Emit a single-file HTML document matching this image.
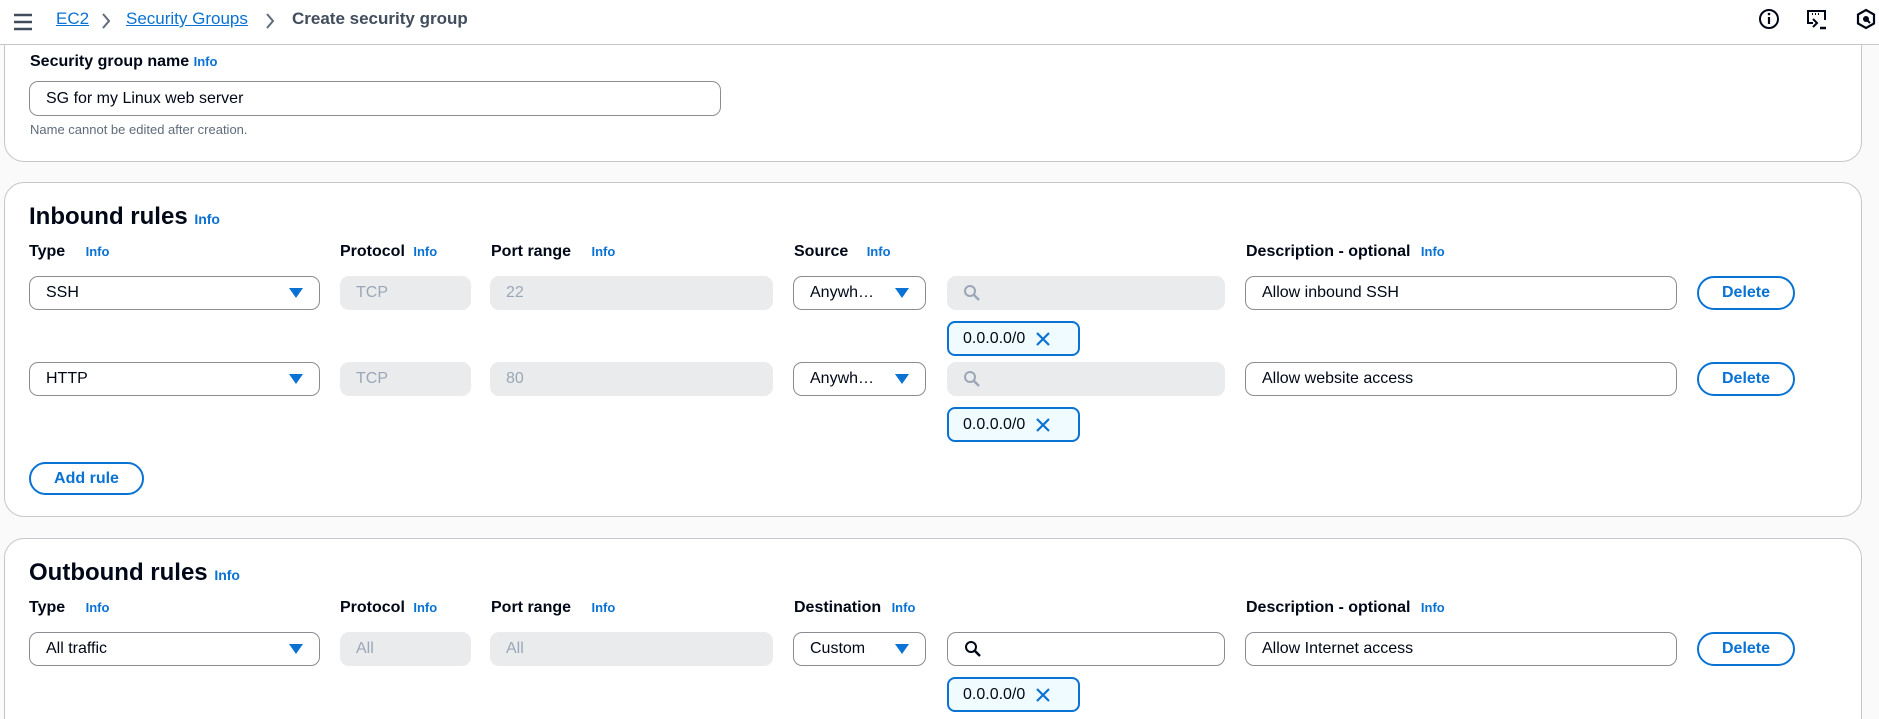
<!DOCTYPE html>
<html><head><meta charset="utf-8"><style>
*{box-sizing:border-box;margin:0;padding:0}
html,body{width:1879px;height:719px;overflow:hidden}
body{background:#fafafa;font-family:"Liberation Sans",Arial,sans-serif;color:#000716}
#w{position:relative;width:1879px;height:719px;overflow:hidden}
.a{position:absolute}
.hdr{left:0;top:0;width:1879px;height:45px;background:#fff;border-bottom:1px solid #c6c6cd;z-index:5}
.card{background:#fff;border:1px solid #c6c6cd;border-radius:20px}
.lbl{font-size:16px;font-weight:bold;white-space:nowrap}
.info{color:#0972d3;font-size:13px;font-weight:bold}
.inp{border:1px solid #8c8c94;border-radius:9px;background:#fff;font-size:16px;padding-left:16px;display:flex;align-items:center;white-space:nowrap}
.dis{background:#e9ebed;border-radius:9px;color:#9ba7b6;font-size:16px;padding-left:16px;display:flex;align-items:center}
.btn{border:2px solid #0972d3;border-radius:20px;color:#0972d3;font-weight:bold;font-size:16px;display:flex;align-items:center;justify-content:center;background:#fff}
.chip{border:2px solid #0972d3;border-radius:8px;background:#f0fbff;font-size:16px;display:flex;align-items:center;padding-left:14px}
.tri{position:absolute;right:16px;top:50%;margin-top:-5px;width:0;height:0;border-left:7px solid transparent;border-right:7px solid transparent;border-top:10px solid #0972d3}
.z{z-index:6}
</style></head><body><div id="w">
<div class="a card" style="left:4px;top:-30px;width:1858px;height:192px"></div>
<div class="a hdr"></div>
<svg class="a z" style="left:13px;top:13px" width="20" height="18" viewBox="0 0 20 18"><path d="M1 2h18M1 9h18M1 16h18" stroke="#414d5c" stroke-width="2.5"/></svg>
<div class="a z" style="left:56px;top:9px;font-size:17px;color:#0972d3;text-decoration:underline">EC2</div>
<svg class="a z" style="left:100px;top:12px" width="12" height="18"><path d="M3 2l6 7-6 7" stroke="#5f6b7a" stroke-width="2" fill="none"/></svg>
<div class="a z" style="left:126px;top:9px;font-size:17px;color:#0972d3;text-decoration:underline">Security Groups</div>
<svg class="a z" style="left:264px;top:12px" width="12" height="18"><path d="M3 2l6 7-6 7" stroke="#5f6b7a" stroke-width="2" fill="none"/></svg>
<div class="a z" style="left:292px;top:9px;font-size:17px;font-weight:bold;color:#414d5c">Create security group</div>
<svg class="a z" style="left:1758px;top:8px" width="22" height="22" viewBox="0 0 22 22"><circle cx="11" cy="11" r="9" stroke="#000716" stroke-width="2" fill="none"/><path d="M11 9v7" stroke="#000716" stroke-width="2.2"/><circle cx="11" cy="6" r="1.3" fill="#000716"/></svg>
<svg class="a z" style="left:1805px;top:8px" width="24" height="24" viewBox="0 0 24 24"><path d="M8 15H3V3h17v9" stroke="#000716" stroke-width="2" fill="none"/><path d="M7 6h1M10 6h1M13 6h1" stroke="#000716" stroke-width="2"/><path d="M8 11l4 4-4 4" stroke="#000716" stroke-width="2" fill="none"/><path d="M15 20h6" stroke="#000716" stroke-width="2.5"/></svg>
<svg class="a z" style="left:1855px;top:8px" width="22" height="22" viewBox="0 0 22 22"><path d="M11 2l8 4.5v9L11 20l-8-4.5v-9z" stroke="#000716" stroke-width="2.2" fill="none"/><circle cx="11" cy="11" r="3" fill="#000716"/><path d="M11 11l4 4" stroke="#000716" stroke-width="2"/></svg>

<div class="a lbl" style="left:30px;top:53px">Security group name <span class="info">Info</span></div>
<div class="a inp" style="left:29px;top:81px;width:692px;height:35px">SG for my Linux web server</div>
<div class="a" style="left:30px;top:122px;font-size:13px;color:#5f6b7a">Name cannot be edited after creation.</div>

<div class="a card" style="left:4px;top:182px;width:1858px;height:335px"></div>
<div class="a" style="left:29px;top:203px;font-size:24px;font-weight:bold">Inbound rules <span class="info" style="font-size:14px">Info</span></div>
<div class="a lbl" style="left:29px;top:243px">Type <span class="info" style="margin-left:16px">Info</span></div>
<div class="a lbl" style="left:340px;top:243px">Protocol <span class="info" style="margin-left:4px">Info</span></div>
<div class="a lbl" style="left:491px;top:243px">Port range <span class="info" style="margin-left:16px">Info</span></div>
<div class="a lbl" style="left:794px;top:243px">Source <span class="info" style="margin-left:14px">Info</span></div>
<div class="a lbl" style="left:1246px;top:243px">Description - optional <span class="info" style="margin-left:6px">Info</span></div>

<div class="a inp" style="left:29px;top:276px;width:291px;height:34px">SSH<div class="tri"></div></div>
<div class="a dis" style="left:340px;top:276px;width:131px;height:34px">TCP</div>
<div class="a dis" style="left:490px;top:276px;width:283px;height:34px">22</div>
<div class="a inp" style="left:793px;top:276px;width:133px;height:34px">Anywh…<div class="tri"></div></div>
<div class="a dis" style="left:947px;top:276px;width:278px;height:34px"><svg width="18" height="18" viewBox="0 0 18 18"><circle cx="7" cy="7" r="5" stroke="#9ba7b6" stroke-width="2" fill="none"/><path d="M11 11l5 5" stroke="#9ba7b6" stroke-width="2.5"/></svg></div>
<div class="a inp" style="left:1245px;top:276px;width:432px;height:34px">Allow inbound SSH</div>
<div class="a btn" style="left:1697px;top:276px;width:98px;height:34px">Delete</div>
<div class="a chip" style="left:947px;top:321px;width:133px;height:35px">0.0.0.0/0<svg style="margin-left:10px" width="16" height="16"><path d="M2 2l12 12M14 2L2 14" stroke="#0972d3" stroke-width="2.2"/></svg></div>

<div class="a inp" style="left:29px;top:362px;width:291px;height:34px">HTTP<div class="tri"></div></div>
<div class="a dis" style="left:340px;top:362px;width:131px;height:34px">TCP</div>
<div class="a dis" style="left:490px;top:362px;width:283px;height:34px">80</div>
<div class="a inp" style="left:793px;top:362px;width:133px;height:34px">Anywh…<div class="tri"></div></div>
<div class="a dis" style="left:947px;top:362px;width:278px;height:34px"><svg width="18" height="18" viewBox="0 0 18 18"><circle cx="7" cy="7" r="5" stroke="#9ba7b6" stroke-width="2" fill="none"/><path d="M11 11l5 5" stroke="#9ba7b6" stroke-width="2.5"/></svg></div>
<div class="a inp" style="left:1245px;top:362px;width:432px;height:34px">Allow website access</div>
<div class="a btn" style="left:1697px;top:362px;width:98px;height:34px">Delete</div>
<div class="a chip" style="left:947px;top:407px;width:133px;height:35px">0.0.0.0/0<svg style="margin-left:10px" width="16" height="16"><path d="M2 2l12 12M14 2L2 14" stroke="#0972d3" stroke-width="2.2"/></svg></div>

<div class="a btn" style="left:29px;top:462px;width:115px;height:33px">Add rule</div>

<div class="a card" style="left:4px;top:538px;width:1858px;height:260px"></div>
<div class="a" style="left:29px;top:559px;font-size:24px;font-weight:bold">Outbound rules <span class="info" style="font-size:14px">Info</span></div>
<div class="a lbl" style="left:29px;top:599px">Type <span class="info" style="margin-left:16px">Info</span></div>
<div class="a lbl" style="left:340px;top:599px">Protocol <span class="info" style="margin-left:4px">Info</span></div>
<div class="a lbl" style="left:491px;top:599px">Port range <span class="info" style="margin-left:16px">Info</span></div>
<div class="a lbl" style="left:794px;top:599px">Destination <span class="info" style="margin-left:6px">Info</span></div>
<div class="a lbl" style="left:1246px;top:599px">Description - optional <span class="info" style="margin-left:6px">Info</span></div>

<div class="a inp" style="left:29px;top:632px;width:291px;height:34px">All traffic<div class="tri"></div></div>
<div class="a dis" style="left:340px;top:632px;width:131px;height:34px">All</div>
<div class="a dis" style="left:490px;top:632px;width:283px;height:34px">All</div>
<div class="a inp" style="left:793px;top:632px;width:133px;height:34px">Custom<div class="tri"></div></div>
<div class="a inp" style="left:947px;top:632px;width:278px;height:34px"><svg width="18" height="18" viewBox="0 0 18 18"><circle cx="7" cy="7" r="5" stroke="#000716" stroke-width="2" fill="none"/><path d="M11 11l5 5" stroke="#000716" stroke-width="2.5"/></svg></div>
<div class="a inp" style="left:1245px;top:632px;width:432px;height:34px">Allow Internet access</div>
<div class="a btn" style="left:1697px;top:632px;width:98px;height:34px">Delete</div>
<div class="a chip" style="left:947px;top:677px;width:133px;height:35px">0.0.0.0/0<svg style="margin-left:10px" width="16" height="16"><path d="M2 2l12 12M14 2L2 14" stroke="#0972d3" stroke-width="2.2"/></svg></div>
</div></body></html>
